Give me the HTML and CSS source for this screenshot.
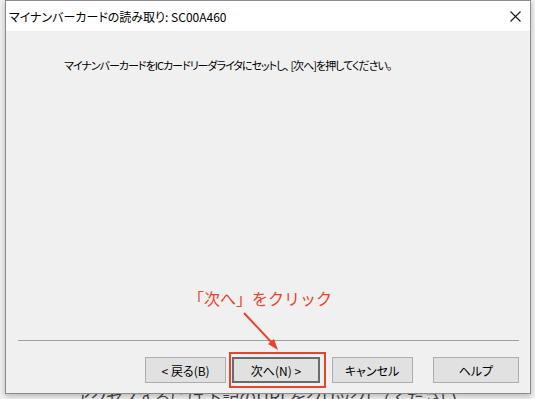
FILE: index.html
```html
<!DOCTYPE html>
<html lang="ja">
<head>
    <meta charset="UTF-8">
    <meta name="viewport" content="width=device-width, initial-scale=1.0">
    <title>マイナンバーカードの読み取り</title>
    <link rel="stylesheet" href="styles.css">
</head>
<body>
    <div class="desktop">
        <p class="page-text">アクセスするには下記のURLをクリックしてください</p>

        <div class="dialog">
            <div class="titlebar">
                <span class="title">マイナンバーカードの読み取り: SC00A460</span>
                <span class="close">
                    <svg width="11" height="11" viewBox="0 0 11 11">
                        <path d="M0.5 0.5 L10.5 10.5 M10.5 0.5 L0.5 10.5" stroke="#1a1a1a" stroke-width="1.1" fill="none"/>
                    </svg>
                </span>
            </div>
            <div class="content">
                <p class="message">マイナンバーカードをICカードリーダライタにセットし、 [次へ]を押してください。</p>
            </div>
            <div class="separator"></div>
            <div class="buttons">
                <button class="btn">&lt; 戻る(B)</button>
                <button class="btn btn-default">次へ(N) &gt;</button>
                <button class="btn btn-cancel">キャンセル</button>
                <button class="btn">ヘルプ</button>
            </div>
        </div>

        <!-- annotation over the dialog -->
        <div class="note">「次へ」をクリック</div>
        <svg class="arrow" width="60" height="60" viewBox="0 0 60 60">
            <path d="M3 3 L34 36" stroke="#e8432b" stroke-width="2" fill="none"/>
            <path d="M37 40 L27 34 L33 29 Z" fill="#e8432b"/>
        </svg>
        <div class="highlight"></div>
    </div>
</body>
</html>
```

FILE: styles.css
```css
body {
    margin: 0;
    background-color: #f1f1f1;
    font-family: "Noto Sans CJK JP", "Noto Sans", sans-serif;
    overflow: hidden;
}

.desktop {
    position: relative;
    width: 535px;
    height: 399px;
}

.page-text {
    position: absolute;
    left: 75px;
    top: 384px;
    margin: 0;
    font-size: 17.5px;
    color: #4a4a4a;
    white-space: nowrap;
    font-feature-settings: "palt";
}

.dialog {
    position: absolute;
    left: 5px;
    top: 0;
    width: 524px;
    height: 392px;
    border: 1px solid #8c8c8c;
    background-color: #f0f0f0;
    display: flex;
    flex-direction: column;
    box-shadow: 0 2px 6px rgba(0, 0, 0, 0.25);
}

.titlebar {
    height: 30px;
    background-color: #ffffff;
    display: flex;
    align-items: center;
    justify-content: space-between;
    padding: 0 0 0 3px;
}

.title {
    font-size: 12px;
    color: #000;
    font-feature-settings: "palt";
}

.close {
    display: flex;
    width: 30px;
    justify-content: center;
}

.content {
    flex: 1;
}

.message {
    margin: 26px 0 0 58px;
    font-size: 11px;
    color: #000;
    font-feature-settings: "palt";
    letter-spacing: -1px;
}

.separator {
    height: 1px;
    background-color: #a0a0a0;
    margin: 0 11px 0 12px;
}

.buttons {
    display: flex;
    padding: 16px 11px 10px 139px;
}

.btn {
    width: 82px;
    height: 26px;
    margin-right: 6px;
    background-color: #e1e1e1;
    border: 1px solid #adadad;
    font-family: "Noto Sans CJK JP", "Noto Sans", sans-serif;
    font-size: 12px;
    color: #000;
    padding: 0;
    font-feature-settings: "palt";
}

.btn-default {
    width: 88px;
    border: 2px solid #6b6b6b;
}

.btn-cancel {
    margin-left: 6px;
    margin-right: 20px;
}

.btn:last-child {
    width: 87px;
    margin-right: 0;
}

.note {
    position: absolute;
    left: 188px;
    top: 286px;
    font-size: 16px;
    color: #e8432b;
}

.arrow {
    position: absolute;
    left: 241px;
    top: 310px;
}

.highlight {
    position: absolute;
    left: 229px;
    top: 352px;
    width: 93px;
    height: 32px;
    border: 2px solid #e8432b;
}
```
